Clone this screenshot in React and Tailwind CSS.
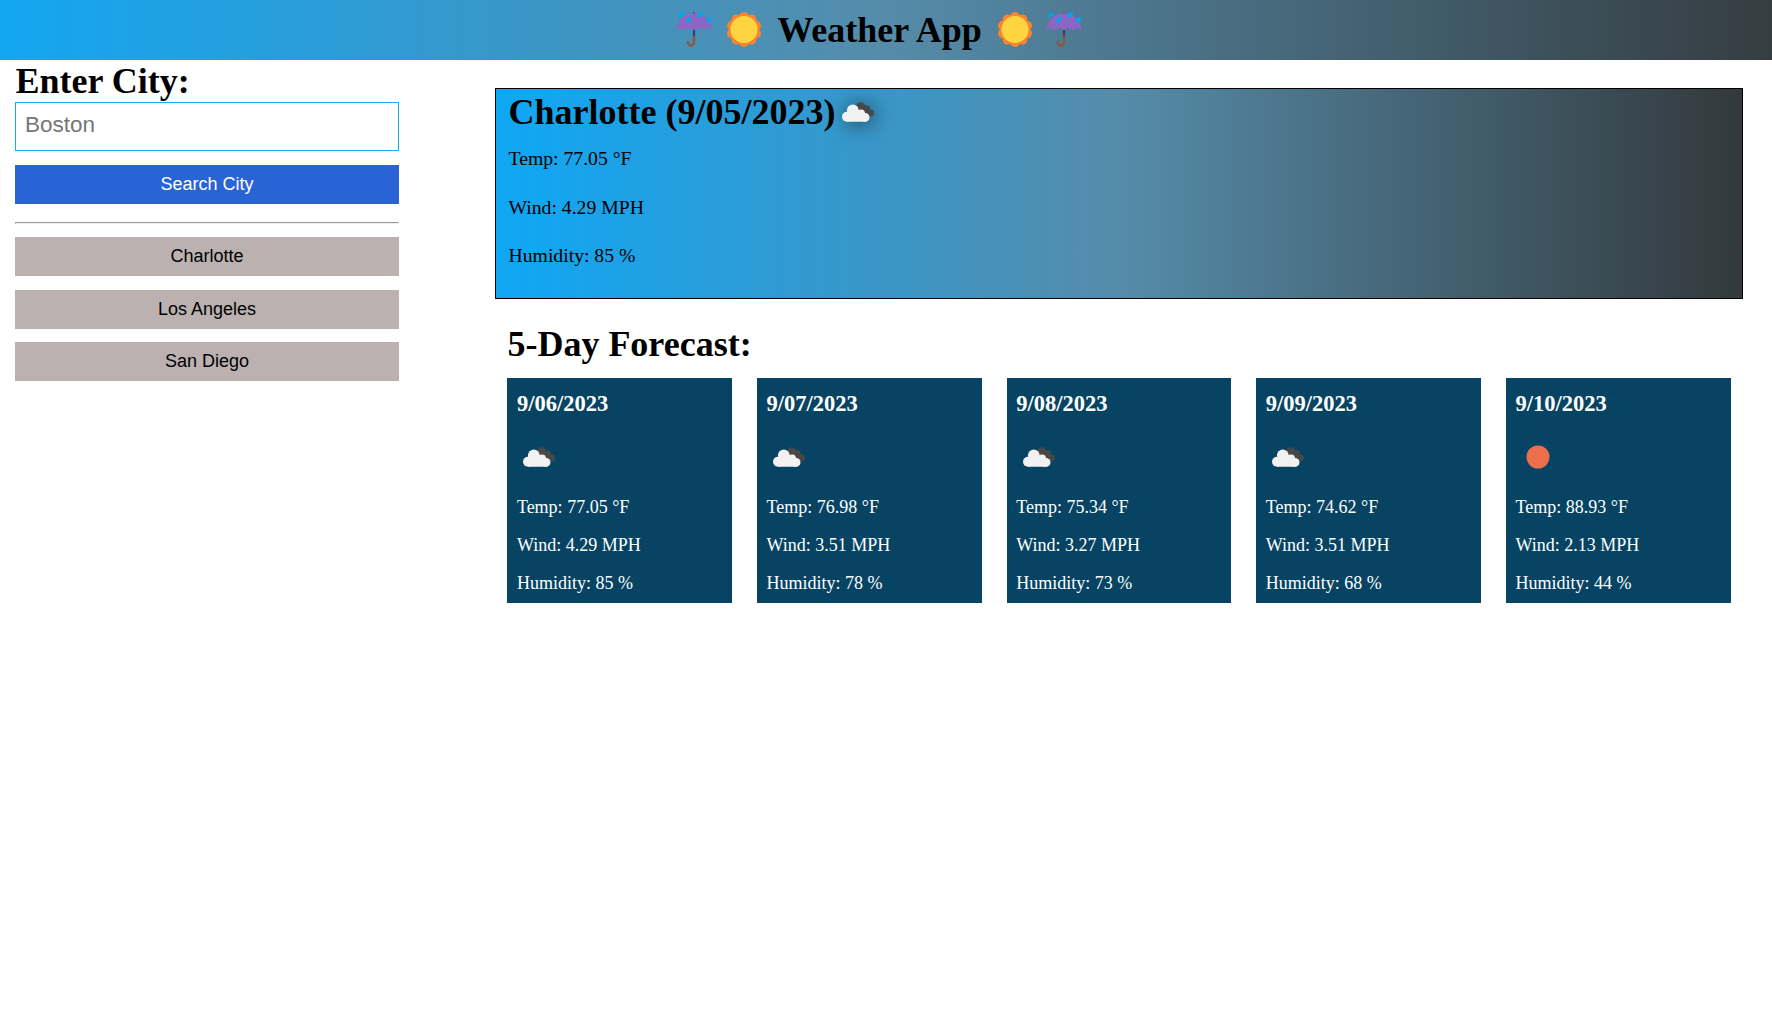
const days = [
  { date: '9/06/2023', icon: 'cloud', temp: '77.05', wind: '4.29', humidity: 85 },
  { date: '9/07/2023', icon: 'cloud', temp: '76.98', wind: '3.51', humidity: 78 },
  { date: '9/08/2023', icon: 'cloud', temp: '75.34', wind: '3.27', humidity: 73 },
  { date: '9/09/2023', icon: 'cloud', temp: '74.62', wind: '3.51', humidity: 68 },
  { date: '9/10/2023', icon: 'sun', temp: '88.93', wind: '2.13', humidity: 44 },
];

const cities = ['Charlotte', 'Los Angeles', 'San Diego'];

const petals = [0, 36, 72, 108, 144, 180, 216, 252, 288, 324];

function Umbrella() {
  return (
    <svg viewBox="0 0 36 36" className="h-9 w-9 shrink-0">
      <path d="M18 0.5v3M18 15v11" stroke="#433b6b" strokeWidth="2.2" />
      <path d="M18 25v5.500a3 3 0 0 1-6 0v-.5" fill="none" stroke="#8b5742" strokeWidth="2.400" strokeLinecap="round" />
      <path d="M0.300 18.500C1.200 8 9 1.300 18 1.300S34.800 8 35.700 18.500Q31.500 13.500 27 18.500Q22.500 14 18 18.200Q13.500 14 9 18.500Q4.500 13.500 0.300 18.500Z" fill="#8d65c5" />
      <path
        d="M3.800 3.700l1.600-1.600M12 8.500l1.600-1.600M23.400 3.700l1.600-1.600M32 8.500l1.600-1.600"
        stroke="#00a6ed"
        strokeWidth="3.800"
        strokeLinecap="round"
      />
    </svg>
  );
}

function Sun() {
  return (
    <svg viewBox="0 0 36 36" className="h-9 w-9 shrink-0">
      <g fill="#ff822d">
        <circle cx="18" cy="17.500" r="15" />
        {petals.map((angle) => (
          <circle key={angle} cx="18" cy="5" r="5" transform={`rotate(${angle} 18 17.500)`} />
        ))}
      </g>
      <circle cx="18" cy="17.500" r="13.500" fill="#fcd53f" />
    </svg>
  );
}

function Clouds({ className }) {
  return (
    <svg viewBox="0 0 32 20" className={className}>
      <g fill="#484848">
        <circle cx="18.700" cy="4.700" r="4.500" />
        <circle cx="24.500" cy="6.800" r="3.500" />
        <circle cx="28.500" cy="11" r="3.400" />
        <path d="M17 3L22 5L29 9L27.500 14.200L19 12z" />
      </g>
      <g fill="#f2f2f2">
        <circle cx="10.800" cy="8.400" r="5.900" />
        <circle cx="5" cy="14.800" r="5" />
        <circle cx="19" cy="11.500" r="4" />
        <circle cx="23" cy="15.400" r="4.500" />
        <path d="M5 19.800V10L12 7L19 9L23 12V19.850z" />
      </g>
    </svg>
  );
}

function Forecast({ day }) {
  return (
    <div className="h-[225px] bg-[#074463] px-[9.500px] pt-[13px] text-[18px] leading-[38px] text-white">
      <h3 className="text-[22.500px] leading-[26px] font-bold">{day.date}</h3>
      <div className="flex h-[71px] items-center pt-[8px]">
        {day.icon === 'cloud' ? (
          <Clouds className="ml-[6.500px] h-5 w-8" />
        ) : (
          <svg viewBox="0 0 24 24" className="ml-[10.500px] h-6 w-6">
            <circle cx="12" cy="12" r="11.500" fill="#ec6e4c" />
          </svg>
        )}
      </div>
      <p>Temp: {day.temp} °F</p>
      <p>Wind: {day.wind} MPH</p>
      <p>Humidity: {day.humidity} %</p>
    </div>
  );
}

export default function App() {
  return (
    <div className="min-h-screen bg-white font-['Liberation_Serif',serif] text-black">
      <header className="flex h-[60px] items-center justify-center bg-[linear-gradient(90deg,#13a6f1_0%,#558caa_50%,#353d41_100%)] pr-[14px]">
        <div className="flex items-center gap-[14px]">
          <Umbrella />
          <Sun />
        </div>
        <h1 className="mx-[15px] text-[36px] leading-[60px] font-bold">Weather App</h1>
        <div className="flex items-center gap-[13px]">
          <Sun />
          <Umbrella />
        </div>
      </header>
      <div className="flex pl-[15px]">
        <aside className="w-[384px] shrink-0 font-['Liberation_Sans',sans-serif] text-[18px]">
          <h2 className="h-[42px] pl-[0.500px] font-['Liberation_Serif',serif] text-[36px] leading-[42px] font-bold">Enter City:</h2>
          <input
            placeholder="Boston"
            className="block h-[49px] w-full border border-[#12b2e7] px-[9px] pb-[3px] text-[22.500px] placeholder:text-[#757575]"
          />
          <button className="mt-[14px] block h-[39px] w-full bg-[#2964d6] text-white">Search City</button>
          <hr className="mt-[18px] mb-[13px] h-[2px] border border-t-[#9a9a9a] border-r-[#eeeeee] border-b-[#eeeeee] border-l-[#9a9a9a]" />
          <div className="flex flex-col gap-[13.600px]">
            {cities.map((city) => (
              <button key={city} className="block h-[39px] w-full bg-[#bab1b0]">
                {city}
              </button>
            ))}
          </div>
        </aside>
        <main className="mt-[28px] mr-[29px] ml-[96px] flex-1">
          <section className="h-[211px] border border-black bg-[linear-gradient(90deg,#0fa7f5_0%,#558caa_50%,#33393c_100%)] px-[12.500px] text-[19.700px]">
            <div className="flex h-[45px] items-center">
              <h2 className="text-[36px] leading-[46px] font-bold">Charlotte (9/05/2023)</h2>
              <Clouds className="ml-[6.500px] h-5 w-8 overflow-visible drop-shadow-[2px_2px_10px_rgba(0,0,0,0.55)]" />
            </div>
            <div className="flex flex-col leading-[48.500px]">
              <p>Temp: 77.05 °F</p>
              <p>Wind: 4.29 MPH</p>
              <p>Humidity: 85 %</p>
            </div>
          </section>
          <section className="mt-[23px] px-[12.400px]">
            <h2 className="h-[56px] text-[36px] leading-[44px] font-bold">5-Day Forecast:</h2>
            <div className="grid grid-cols-5 gap-[25px]">
              {days.map((day) => (
                <Forecast key={day.date} day={day} />
              ))}
            </div>
          </section>
        </main>
      </div>
    </div>
  );
}
